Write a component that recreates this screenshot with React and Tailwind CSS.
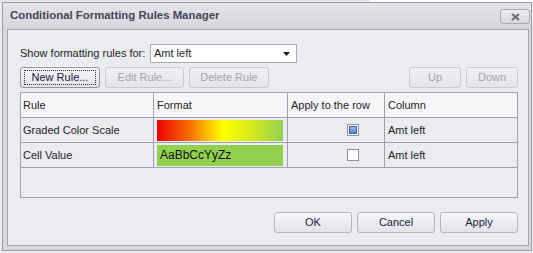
import React from "react";

const font = { fontFamily: '"Liberation Sans", Arial, sans-serif' };

function Btn({ children, w, disabled, focused }) {
  return (
    <div
      className={`flex items-center justify-center h-[21px] rounded-[3px] border text-[11px] ${
        disabled
          ? "border-[#c9cad1] text-[#a3a4ad] bg-gradient-to-b from-[#f0f0f3] to-[#e4e5e9]"
          : focused
          ? "border-[#8d93a8] text-[#1b1b3a] bg-gradient-to-b from-[#f7f7f9] to-[#e2e3e8]"
          : "border-[#b3b4bd] text-[#1b1b4a] bg-gradient-to-b from-[#f7f7f9] to-[#e2e3e8]"
      }`}
      style={{ width: w }}
    >
      {focused ? (
        <div className="flex items-center justify-center w-[calc(100%-6px)] h-[15px] border border-dotted border-[#333]">
          {children}
        </div>
      ) : (
        children
      )}
    </div>
  );
}

function Checkbox({ checked }) {
  return (
    <div className="w-[12px] h-[12px] border border-[#8e8f99] bg-white flex items-center justify-center">
      {checked ? (
        <div className="w-[8px] h-[8px] border border-[#3d5fa8] bg-gradient-to-b from-[#9db6ea] to-[#5a7fcf]" />
      ) : null}
    </div>
  );
}

export default function App() {
  return (
    <div
      className="w-[533px] h-[253px] bg-[#ececef] relative overflow-hidden"
      style={font}
    >
      <div className="h-[2px] flex">
        <div className="w-[370px] bg-[#e6e6ea]" />
        <div className="flex-1 bg-white" />
      </div>
      <div className="ml-[2px] w-[530px] h-[249px] border border-[#9c9da6] bg-[#d7d8dd] flex flex-col">
        {/* title bar */}
        <div className="h-[26px] flex items-center pl-[7px] pr-[1px] bg-gradient-to-b from-[#e4e5e9] to-[#d6d7dc]">
          <div className="text-[11.4px] font-bold text-[#45465a] flex-1">
            Conditional Formatting Rules Manager
          </div>
          <div className="w-[30px] h-[15px] mt-[1px] rounded-[3px] border border-[#a9aab3] bg-gradient-to-b from-[#eeeef1] to-[#d9dade] flex items-center justify-center">
            <svg width="9" height="8" viewBox="0 0 9 8">
              <path d="M1 1 L8 7 M8 1 L1 7" stroke="#6a6b78" strokeWidth="2" />
            </svg>
          </div>
        </div>
        {/* panel */}
        <div className="ml-[4px] mr-[1px] w-[522px] h-[217px] border border-[#a4a5ae] bg-[#ebecef] pl-[12px] pt-[14px] flex flex-col">
          <div className="flex items-center h-[19px]">
            <span className="text-[11px] text-[#1e1e28] w-[130px]">Show formatting rules for:</span>
            <div className="w-[147px] h-[19px] border border-[#a9aab2] bg-white flex items-center pl-[3px] pr-[6px]">
              <span className="text-[11px] text-[#1e1e28] flex-1">Amt left</span>
              <svg width="7" height="4" viewBox="0 0 7 4">
                <path d="M0 0 H7 L3.5 4 Z" fill="#222" />
              </svg>
            </div>
          </div>
          <div className="flex mt-[4px] h-[21px]">
            <Btn w={80} focused>New Rule...</Btn>
            <div className="w-[5px]" />
            <Btn w={79} disabled>Edit Rule...</Btn>
            <div className="w-[5px]" />
            <Btn w={80} disabled>Delete Rule</Btn>
            <div className="flex-1" />
            <Btn w={52} disabled>Up</Btn>
            <div className="w-[5px]" />
            <Btn w={52} disabled>Down</Btn>
            <div className="w-[10px]" />
          </div>
          {/* table */}
          <div className="mt-[4px] w-[498px] h-[106px] border border-[#a0a1aa] flex flex-col text-[11px] text-[#1e1e28]">
            <div className="grid grid-cols-[133px_134px_97px_1fr] h-[25px] bg-[#f6f6f8] border-b border-[#a0a1aa]">
              <div className="pl-[2px] flex items-center border-r border-[#a0a1aa]">Rule</div>
              <div className="pl-[3px] flex items-center border-r border-[#a0a1aa]">Format</div>
              <div className="pl-[3px] flex items-center border-r border-[#a0a1aa]">Apply to the row</div>
              <div className="pl-[3px] flex items-center">Column</div>
            </div>
            <div className="grid grid-cols-[133px_134px_97px_1fr] h-[25px] border-b border-[#a0a1aa]">
              <div className="pl-[2px] flex items-center border-r border-[#a0a1aa]">Graded Color Scale</div>
              <div className="flex items-center pl-[3px] border-r border-[#a0a1aa]">
                <div
                  className="w-[126px] h-[21px]"
                  style={{
                    background:
                      "linear-gradient(to right, #f00000 0%, #f56a00 25%, #ffff00 52%, #d6ea1c 75%, #92d050 100%)",
                  }}
                />
              </div>
              <div className="flex items-center justify-end pr-[25px] border-r border-[#a0a1aa]">
                <Checkbox checked />
              </div>
              <div className="pl-[3px] flex items-center">Amt left</div>
            </div>
            <div className="grid grid-cols-[133px_134px_97px_1fr] h-[25px] border-b border-[#a0a1aa]">
              <div className="pl-[2px] flex items-center border-r border-[#a0a1aa]">Cell Value</div>
              <div className="flex items-center pl-[3px] border-r border-[#a0a1aa]">
                <div className="w-[126px] h-[21px] bg-[#92d050] flex items-center pl-[3px] text-[12px] text-[#111]">
                  AaBbCcYyZz
                </div>
              </div>
              <div className="flex items-center justify-end pr-[25px] border-r border-[#a0a1aa]">
                <Checkbox />
              </div>
              <div className="pl-[3px] flex items-center">Amt left</div>
            </div>
          </div>
          <div className="flex justify-end mt-[14px] pr-[10px]">
            <Btn w={78}>OK</Btn>
            <div className="w-[5px]" />
            <Btn w={78}>Cancel</Btn>
            <div className="w-[5px]" />
            <Btn w={78}>Apply</Btn>
          </div>
        </div>
      </div>
    </div>
  );
}
